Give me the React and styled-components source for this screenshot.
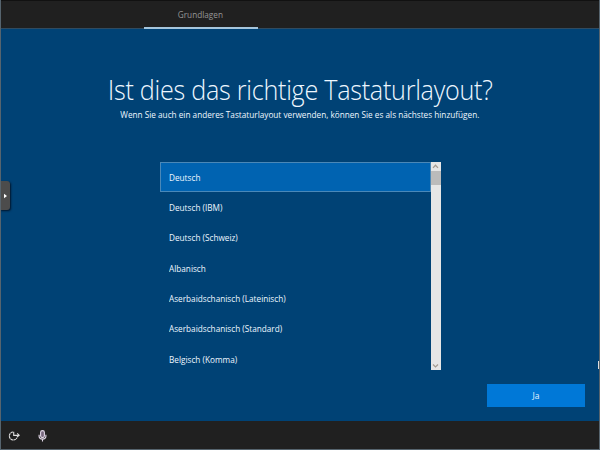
import React from "react";
import styled, { createGlobalStyle } from "styled-components";

const GlobalStyle = createGlobalStyle`
  * { box-sizing: border-box; }
  body { margin: 0; overflow: hidden; background: #004275; }
`;

const Screen = styled.div`
  position: relative;
  width: 600px;
  height: 450px;
  display: flex;
  flex-direction: column;
  overflow: hidden;
  background: #004275;
  color: #eef7ff;
  font-family: "Open Sans", "Noto Sans", sans-serif;
  font-size: 8.5px;
  border: solid #56646e;
  border-width: 0 1px 1px 1px;
`;

const TopBar = styled.header`
  flex: none;
  height: 29px;
  padding-left: 143px;
  background: #202020;
  border-top: 1px solid #111;
  border-bottom: 1px solid #304b60;
`;

const Tab = styled.div`
  width: 114px;
  height: 28px;
  display: flex;
  justify-content: center;
  padding: 8px 1px 0 0;
  line-height: 12px;
  color: #969696;
  border-bottom: 2px solid #a5c5dc;
`;

const Label = styled.span`
  display: inline-block;
  white-space: nowrap;
  transform: scaleX(0.966);
  transform-origin: ${(p) => (p.$centered ? "center" : "left")};
`;

const Main = styled.main`
  flex: 1;
  display: flex;
  flex-direction: column;
  align-items: center;
  padding-top: 42px;
`;

const Title = styled.h1`
  margin: 0;
  height: 38px;
  line-height: 37px;
  font-size: 27.5px;
  font-weight: 300;
  white-space: nowrap;
  letter-spacing: -0.3px;
  transform: scaleX(0.916);
`;

const Initial = styled.span`
  font-family: Lato, sans-serif;
`;

const Subtitle = styled.p`
  margin: 0;
  height: 12px;
  line-height: 12px;
  white-space: nowrap;
`;

const ListBox = styled.div`
  display: flex;
  width: 281px;
  height: 208px;
  margin-top: 41px;
`;

const Options = styled.ul`
  flex: 1;
  margin: 0;
  padding: 0;
  list-style: none;
  overflow: hidden;
`;

const Option = styled.li`
  height: 30.35px;
  display: flex;
  align-items: center;
  padding-left: ${(p) => (p.$selected ? 8.5 : 9.5)}px;
  background: ${(p) => (p.$selected ? "#0063b1" : "transparent")};
  border: ${(p) => (p.$selected ? "1px solid #4a88b8" : "0")};
`;

const ScrollBar = styled.div`
  width: 10px;
  display: flex;
  flex-direction: column;
  align-items: center;
  background: #e6e6e6;
`;

const ScrollThumb = styled.div`
  width: 10px;
  height: 14px;
  background: #bbb;
`;

const Spacer = styled.div`
  flex: 1;
`;

const Actions = styled.div`
  align-self: stretch;
  display: flex;
  justify-content: flex-end;
  margin-top: 14px;
  padding-right: 14px;
`;

const PrimaryButton = styled.button`
  width: 98px;
  height: 23px;
  padding: 0;
  border: 0;
  background: #0078d7;
  color: #e9f5ff;
  font: inherit;
`;

const BottomBar = styled.footer`
  flex: none;
  height: 28px;
  display: flex;
  align-items: center;
  gap: 17px;
  padding: 2px 0 0 7px;
  background: #202020;
`;

const SideHandle = styled.div`
  position: absolute;
  left: -1px;
  top: 181px;
  width: 10px;
  height: 29px;
  display: flex;
  align-items: center;
  justify-content: center;
  border-radius: 0 3px 3px 0;
  background: #4c4c4c;
  box-shadow: 1px 1px 2px rgba(0, 10, 25, 0.8);
`;

const EdgeMark = styled.div`
  position: absolute;
  right: -1px;
  top: 361px;
  width: 2px;
  height: 8px;
  background: #dedede;
`;

const Chevron = ({ down }) => (
  <svg width="9" height="9" viewBox="0 0 9 9" fill="none" stroke="#a39b92" strokeWidth="1.3">
    <path d={down ? "M2 3.5 4.5 5.9 7 3.5" : "M2 5.9 4.5 3.3 7 5.9"} />
  </svg>
);

const EaseOfAccess = () => (
  <svg width="12" height="12" viewBox="0 0 12 12" fill="none" stroke="#dedede" strokeWidth="1.1">
    <path d="M5 2A4 4 0 1 0 9 7.6" strokeDasharray="2.6 .4" />
    <path d="M5.7 1.8V5.4H11M9.2 3.4 11.2 5.2 9 7" />
  </svg>
);

const Microphone = () => (
  <svg width="11" height="12" viewBox="0 0 11 12" fill="none" stroke="#e0d6e6" strokeWidth="1.1">
    <rect x="3.6" y=".6" width="3.8" height="7" rx="1.9" fill="#76677d" />
    <path d="M2.1 4.8v1.7Q2.2 9.1 5.5 9.1 8.8 9.1 8.9 6.5V4.8M5.5 9v2.5" />
  </svg>
);

const layouts = [
  "Deutsch",
  "Deutsch (IBM)",
  "Deutsch (Schweiz)",
  "Albanisch",
  "Aserbaidschanisch (Lateinisch)",
  "Aserbaidschanisch (Standard)",
  "Belgisch (Komma)",
];

export default function App() {
  return (
    <>
      <GlobalStyle />
      <Screen>
        <TopBar>
          <Tab><Label $centered>Grundlagen</Label></Tab>
        </TopBar>
        <Main>
          <Title><Initial>I</Initial>st dies das richtige Tastaturlayout?</Title>
          <Subtitle>
            <Label $centered>Wenn Sie auch ein anderes Tastaturlayout verwenden, können Sie es als nächstes hinzufügen.</Label>
          </Subtitle>
          <ListBox>
            <Options>
              {layouts.map((name, i) => (
                <Option key={name} $selected={i === 0}><Label>{name}</Label></Option>
              ))}
            </Options>
            <ScrollBar>
              <Chevron />
              <ScrollThumb />
              <Spacer />
              <Chevron down />
            </ScrollBar>
          </ListBox>
          <Actions>
            <PrimaryButton>Ja</PrimaryButton>
          </Actions>
        </Main>
        <BottomBar>
          <EaseOfAccess />
          <Microphone />
        </BottomBar>
        <SideHandle>
          <svg width="5" height="6" viewBox="0 0 5 6"><path d="M1 .8 4 3 1 5.2Z" fill="#fff" /></svg>
        </SideHandle>
        <EdgeMark />
      </Screen>
    </>
  );
}
